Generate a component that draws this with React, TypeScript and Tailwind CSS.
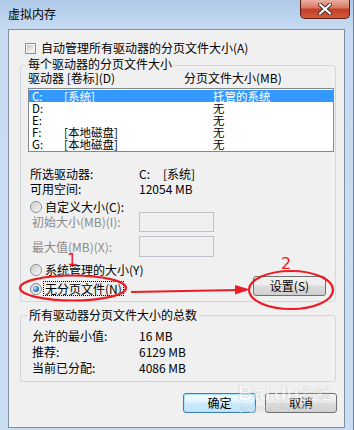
import React from "react";

const Radio = ({ checked }: { checked?: boolean }) => (
  <div className="w-[12px] h-[12px] shrink-0 rounded-full border border-[#8d8f91] bg-[linear-gradient(135deg,#d4d4d4,#fbfbfb)] flex items-center justify-center">
    {checked ? (
      <div className="w-[6px] h-[6px] rounded-full bg-[radial-gradient(circle_at_35%_35%,#c4e8ff,#2f7ac4_55%,#123a68)]" />
    ) : (
      <div className="w-[8px] h-[8px] rounded-full bg-[linear-gradient(135deg,#cfcfcf,#f4f4f4)]" />
    )}
  </div>
);

const drives = [
  { d: "C:", label: "[系统]", size: "托管的系统", selected: true },
  { d: "D:", label: "", size: "无" },
  { d: "E:", label: "", size: "无" },
  { d: "F:", label: "[本地磁盘]", size: "无" },
  { d: "G:", label: "[本地磁盘]", size: "无" },
];

const btn =
  "h-[20px] rounded-[3px] border border-[#707070] bg-[linear-gradient(#f2f2f2,#ebebeb_45%,#dddddd_50%,#cfcfcf)] flex items-center justify-center leading-[12px]";

export default function App() {
  return (
    <div className="w-[354px] h-[430px] relative overflow-hidden bg-[linear-gradient(180deg,#afc9e8,#c6daf1_28px,#cadef3)] border-r border-[#6f8298] font-['Noto_Sans_CJK_SC',sans-serif] text-[12px] text-black">
      {/* title bar */}
      <div className="h-[29px] flex items-start justify-between">
        <div className="pl-[8px] pt-[8px] leading-[12px]">虚拟内存</div>
        <div className="mr-[3px] w-[50px] h-[19px] rounded-b-[5px] border border-t-0 border-[#5b1c12] bg-[linear-gradient(#eab0a3,#d9735d_45%,#c23f28_50%,#d3583c)] flex items-center justify-center">
          <svg width="14" height="12" viewBox="0 0 14 12">
            <path d="M2 1.5 L12 10.5 M12 1.5 L2 10.5" stroke="#4a2a25" strokeWidth="4" strokeLinecap="round" />
            <path d="M2 1.5 L12 10.5 M12 1.5 L2 10.5" stroke="#ffffff" strokeWidth="2.2" strokeLinecap="round" />
          </svg>
        </div>
      </div>

      {/* client area */}
      <div className="mx-[8px] h-[399px] bg-[#f0f0f0] border border-[#7f90a3] flex flex-col">
        <div className="mt-[11px] h-[14px] flex items-center pl-[16px] gap-[5px] leading-[12px]">
          <div className="w-[11px] h-[11px] border border-[#8f8f8f] bg-[#f4f4f4] p-[1px]">
            <div className="w-full h-full bg-[linear-gradient(135deg,#cbcbcb,#f7f7f7)]" />
          </div>
          <span>自动管理所有驱动器的分页文件大小(A)</span>
        </div>

        <fieldset className="ml-[11px] mr-[8px] mt-[2px] pb-[5px] border border-[#d0d8de] rounded-[3px]">
          <legend className="ml-[5px] px-[2px] leading-[14px] pb-[3px]">每个驱动器的分页文件大小</legend>
          <div className="-mt-[2px] h-[12px] flex items-center pl-[7px] leading-[12px]">
            <span className="w-[156px]">驱动器 [卷标](D)</span>
            <span>分页文件大小(MB)</span>
          </div>
          <div className="mt-[4px] ml-[7px] mr-[1px] h-[64px] border border-[#828790] bg-white pt-[1px]">
            {drives.map((r) => (
              <div
                key={r.d}
                className={`h-[12px] flex items-center pl-[3px] text-[11.5px] leading-[11px] ${
                  r.selected ? "bg-[#3399ff] text-white" : ""
                }`}
              >
                <span className="w-[32px]">{r.d}</span>
                <span className="w-[149px]">{r.label}</span>
                <span>{r.size}</span>
              </div>
            ))}
          </div>

          <div className="mt-[14px] h-[15px] flex items-center pl-[9px] leading-[12px]">
            <span className="w-[109px]">所选驱动器:</span>
            <span className="w-[24px]">C:</span>
            <span>[系统]</span>
          </div>
          <div className="h-[15px] flex items-center pl-[9px] leading-[12px]">
            <span className="w-[109px]">可用空间:</span>
            <span>12054 MB</span>
          </div>

          <div className="mt-[5px] h-[12px] flex items-center pl-[9px] gap-[3px] leading-[12px]">
            <Radio />
            <span>自定义大小(C):</span>
          </div>
          <div className="-mt-[1px] h-[20px] flex items-center pl-[11px] leading-[12px] text-[#8b8b8b]">
            <span className="w-[107px]">初始大小(MB)(I):</span>
            <div className="w-[75px] h-[20px] border border-[#bcc2c7] bg-[#f0f0f0]" />
          </div>
          <div className="mt-[4px] h-[21px] flex items-center pl-[11px] leading-[12px] text-[#8b8b8b]">
            <span className="w-[107px]">最大值(MB)(X):</span>
            <div className="w-[75px] h-[21px] border border-[#bcc2c7] bg-[#f0f0f0]" />
          </div>

          <div className="mt-[7px] h-[12px] flex items-center pl-[9px] gap-[3px] leading-[12px]">
            <Radio />
            <span>系统管理的大小(Y)</span>
          </div>
          <div className="mt-[1px] h-[19px] flex items-end justify-between pl-[9px] pr-[9px]">
            <div className="h-[15px] flex items-center gap-[1px]">
              <Radio checked />
              <span className="h-[15px] border border-dotted border-black px-[1px] leading-[13px]">无分页文件(N)</span>
            </div>
            <button className={`${btn} w-[73px] h-[19px]`}>设置(S)</button>
          </div>
        </fieldset>

        <fieldset className="ml-[11px] mr-[8px] mt-[6px] pb-[5px] border border-[#d0d8de] rounded-[3px]">
          <legend className="ml-[6px] px-[2px] leading-[14px] pb-[1px]">所有驱动器分页文件大小的总数</legend>
          <div className="mt-[5px] h-[16px] flex items-center pl-[11px] leading-[12px]">
            <span className="w-[107px]">允许的最小值:</span>
            <span>16 MB</span>
          </div>
          <div className="h-[16px] flex items-center pl-[11px] leading-[12px]">
            <span className="w-[107px]">推荐:</span>
            <span>6129 MB</span>
          </div>
          <div className="h-[16px] flex items-center pl-[11px] leading-[12px]">
            <span className="w-[107px]">当前已分配:</span>
            <span>4086 MB</span>
          </div>
        </fieldset>

        <div className="mt-[11px] flex justify-end gap-[9px] pr-[7px]">
          <button className="w-[73px] h-[20px] rounded-[3px] border border-[#3c7fb1] bg-[linear-gradient(#f4fbff,#e3f4fd_45%,#cdebfc_50%,#bfe5fa)] shadow-[inset_0_0_0_1px_#aee3fc] flex items-center justify-center leading-[12px]">
            确定
          </button>
          <button className={`${btn} w-[72px]`}>取消</button>
        </div>
      </div>

      {/* baidu watermark */}
      <div className="absolute left-[238px] top-[383px] pointer-events-none opacity-50 text-white [text-shadow:0_0_1px_#9a9a9a,0_0_1px_#9a9a9a]">
        <div className="flex items-end leading-[20px]">
          <span className="font-['Liberation_Sans',sans-serif] font-bold text-[21px]">Bai</span>
          <span className="font-['Liberation_Sans',sans-serif] font-bold text-[21px] ml-[3px]">du</span>
          <span className="text-[15px] ml-[2px]">经验</span>
        </div>
        <div className="font-['Liberation_Sans',sans-serif] text-[9px] leading-[10px] pl-[2px]">jingyan.baidu.com</div>
      </div>

      {/* red annotations */}
      <svg className="absolute inset-0 pointer-events-none" width="354" height="430" viewBox="0 0 354 430">
        <ellipse cx="73" cy="288" rx="53" ry="12.5" fill="none" stroke="#ec1c24" strokeWidth="2.2" />
        <ellipse cx="291" cy="290" rx="42" ry="19" fill="none" stroke="#ec1c24" strokeWidth="2.2" />
        <path d="M131 292 L238 290" stroke="#ec1c24" strokeWidth="2" />
        <polygon points="235,285 250,289.6 235,294.5" fill="#ec1c24" />
        <text x="67" y="265" fill="#ec1c24" fontSize="16" fontFamily="DejaVu Sans, sans-serif">1</text>
        <text x="281" y="269" fill="#ec1c24" fontSize="16" fontFamily="DejaVu Sans, sans-serif">2</text>
      </svg>
    </div>
  );
}
